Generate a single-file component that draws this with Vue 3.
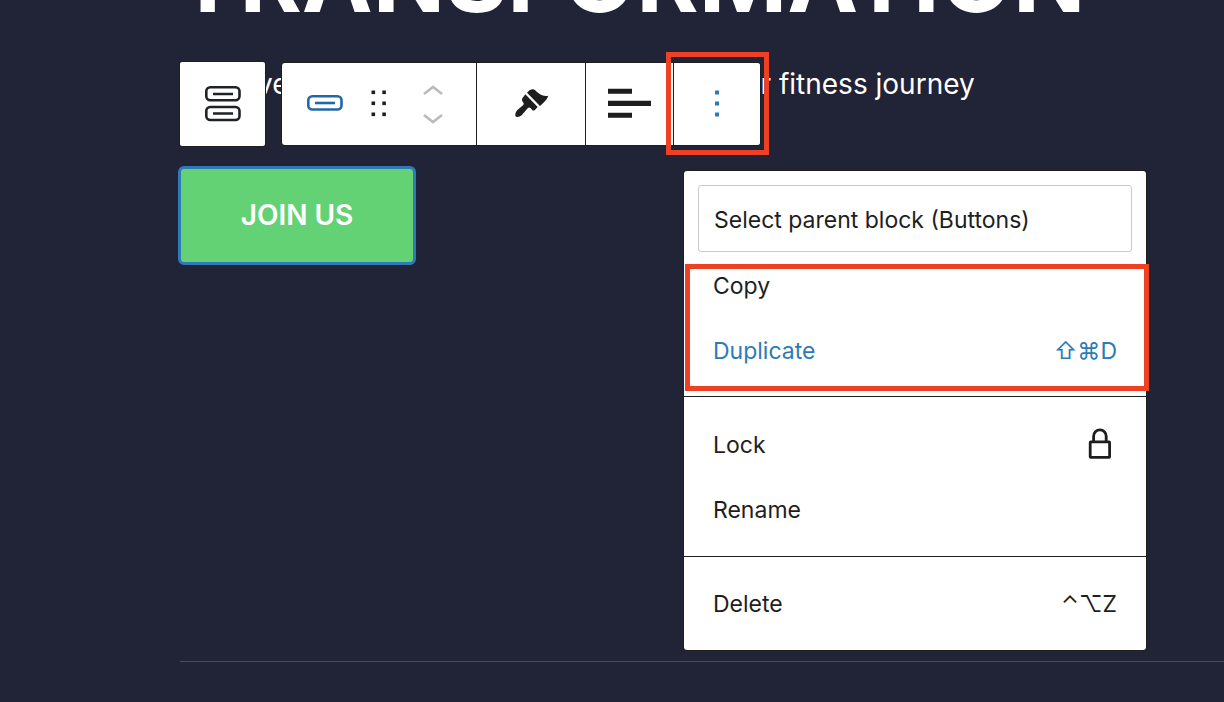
<script setup>
const groups = [
  {
    id: 'edit',
    parent: 'Select parent block (Buttons)',
    marked: true,
    items: [
      { label: 'Copy' },
      { label: 'Duplicate', keys: '⇧⌘D', active: true },
    ],
  },
  {
    id: 'manage',
    items: [{ label: 'Lock', lock: true }, { label: 'Rename' }],
  },
  {
    id: 'remove',
    items: [{ label: 'Delete', keys: '⌃⌥Z' }],
  },
]
const dotRows = [2, 13, 24]
</script>

<template>
  <main class="page">
    <section class="hero">
      <h1 class="title">TRANSFORMATION</h1>
      <p class="tagline"><span>ve</span><span class="tagline-end">r fitness journey</span></p>
      <a class="join" href="#">JOIN US</a>
    </section>
    <hr class="rule" />

    <div class="toolbar" role="toolbar" aria-label="Block tools">
      <button class="tool parent" type="button" aria-label="Select parent block">
        <svg width="36" height="36" viewBox="0 0 36 36" class="line dark">
          <rect x="1.3" y="1.3" width="33.2" height="13" rx="4" />
          <path d="M8 8h20M8 27.500h20" />
          <rect x="1.3" y="21" width="33.2" height="13" rx="4" />
        </svg>
      </button>
      <div class="bar">
        <div class="segment block">
          <button class="tool type" type="button" aria-label="Button">
            <svg width="36" height="16" viewBox="0 0 36 16" class="line blue">
              <rect x="1.3" y="1.3" width="33.2" height="13.2" rx="4" />
              <path d="M8 8h20" />
            </svg>
          </button>
          <button class="tool drag" type="button" aria-label="Drag">
            <svg width="16" height="28" viewBox="0 0 16 28">
              <template v-for="y in dotRows" :key="y">
                <rect x="0.5" :y="y - 0.5" width="3.6" height="3.6" fill="#1e1e1e" />
                <rect x="11.3" :y="y - 0.5" width="3.6" height="3.6" fill="#1e1e1e" />
              </template>
            </svg>
          </button>
          <div class="movers">
            <button class="tool mover" type="button" aria-label="Move up" disabled>
              <svg width="20" height="12" viewBox="0 0 20 12"><path d="M1 10l9-7L19 10" /></svg>
            </button>
            <button class="tool mover" type="button" aria-label="Move down" disabled>
              <svg width="20" height="12" viewBox="0 0 20 12"><path d="M1 2l9 7L19 2" /></svg>
            </button>
          </div>
        </div>
        <button class="tool segment brush" type="button" aria-label="Paste styles">
          <svg width="38" height="32" viewBox="99 112 114 96" fill="#1e1e1e">
            <path d="M141 129Q150 116 160 119Q166 121 171 127L180 134Q192 141 205 138Q201 150 192 158L180 169Z" />
            <path d="M136 134L173 172L164 182Q160 184 156 180Q149 170 143 176L125 197Q118 203 110 202Q104 200 106 193Q107 187 112 181L129 167Q134 162 128 156Q124 151 127 146Z" />
          </svg>
        </button>
        <button class="tool segment align" type="button" aria-label="Align text">
          <svg width="44" height="30" viewBox="0 0 44 30" fill="#1e1e1e">
            <path d="M0 0.800h24v5H0zM0 12.800h43v5.200H0zM0 24.800h24v5H0z" />
          </svg>
        </button>
        <button class="tool segment more" type="button" aria-label="Options">
          <svg width="6" height="28" viewBox="0 0 6 28" fill="#2b7bb9">
            <rect v-for="y in dotRows" :key="y" x="1" :y="y - 0.5" width="4" height="4" />
          </svg>
          <span class="mark mark-more"></span>
        </button>
      </div>
    </div>

    <div class="menu" role="menu" aria-label="Options">
      <div v-for="group in groups" :key="group.id" class="group">
        <button v-if="group.parent" class="select-parent" type="button" role="menuitem">{{ group.parent }}</button>
        <button
          v-for="item in group.items"
          :key="item.label"
          class="item"
          :class="{ active: item.active }"
          type="button"
          role="menuitem"
        >
          <span>{{ item.label }}</span>
          <span v-if="item.keys" class="keys">{{ item.keys }}</span>
          <svg v-if="item.lock" class="lock" width="24" height="34" viewBox="0 0 24 34">
            <rect x="2.2" y="13.9" width="19.4" height="15.4" rx="0.5" />
            <path d="M5.600 13.900V8.200a6.300 6.300 0 0 1 12.600 0v5.700" />
          </svg>
        </button>
        <span v-if="group.marked" class="mark mark-group"></span>
      </div>
    </div>
  </main>
</template>

<style>
body {
  background: #212336;
}
</style>

<style scoped>
.page {
  position: relative;
  box-sizing: border-box;
  min-height: 100vh;
  padding-left: 180px;
  overflow: hidden;
  background: #212336;
  color: #fff;
  font-family: Inter, "Liberation Sans", sans-serif;
}
.hero {
  display: flow-root;
  min-height: 661px;
}
.title {
  margin: -69px 0 0 -4px;
  font-size: 95px;
  line-height: 94px;
  font-weight: 700;
  white-space: nowrap;
}
.tagline {
  display: flex;
  gap: 472px;
  margin: 39px 0 0 77px;
  font-size: 28px;
  line-height: 40px;
  white-space: nowrap;
}
.join {
  display: flex;
  align-items: center;
  justify-content: center;
  box-sizing: border-box;
  width: 238px;
  height: 99px;
  margin: 62px 0 0 -2px;
  padding-bottom: 2px;
  border: 3px solid #2f79b6;
  border-radius: 6px;
  background: #63d274;
  color: #fff;
  font-size: 28px;
  font-weight: 600;
  text-decoration: none;
}
.rule {
  margin: 0;
  border: 0;
  border-top: 1px solid #4a4d60;
}
.tool {
  display: flex;
  align-items: center;
  justify-content: center;
  padding: 0;
  border: 0;
  background: #fff;
}
.tool svg,
.lock {
  display: block;
  flex: none;
}
.line {
  fill: none;
  stroke-width: 2.6;
}
.dark {
  stroke: #1e2327;
}
.blue {
  stroke: #2268a8;
}
.toolbar {
  position: absolute;
  top: 62px;
  left: 180px;
  display: flex;
  align-items: center;
  gap: 17px;
}
.parent {
  width: 85px;
  height: 84px;
  border-radius: 2px;
  box-shadow: 0 0 0 1px #1e1e1e;
}
.bar {
  display: flex;
  height: 82px;
  border-radius: 3px;
  background: #fff;
  box-shadow: 0 0 0 1px #1e1e1e;
}
.segment {
  box-sizing: border-box;
  padding-bottom: 2px;
}
.segment + .segment {
  border-left: 1px solid #1e1e1e;
}
.block {
  display: flex;
  align-items: center;
  width: 194px;
}
.type {
  margin-left: 25px;
}
.drag {
  margin-left: 28px;
}
.movers {
  display: grid;
  gap: 17px;
  margin: 2px 0 0 36px;
}
.mover path {
  fill: none;
  stroke: #bbb;
  stroke-width: 2.6;
}
.brush {
  width: 109px;
  padding-left: 2px;
}
.align {
  width: 88px;
  padding-left: 1px;
}
.more {
  position: relative;
  width: 87px;
  border-radius: 0 3px 3px 0;
}
.mark {
  position: absolute;
  border: 5px solid #ee4023;
  pointer-events: none;
}
.mark-more {
  inset: -11px -9px -10px -8px;
}
.menu {
  position: absolute;
  top: 171px;
  left: 684px;
  width: 462px;
  border-radius: 3px;
  background: #fff;
  box-shadow: 0 0 0 1px #1e1e1e;
  color: #1e1e1e;
}
.group {
  position: relative;
  padding: 15px 14px 14px;
}
.group:first-child {
  padding: 14px 14px 13px;
}
.group:last-child {
  padding: 14px;
}
.group + .group {
  border-top: 1px solid #1e1e1e;
}
.select-parent,
.item {
  display: flex;
  align-items: center;
  box-sizing: border-box;
  width: 100%;
  border: 0;
  background: none;
  color: inherit;
  font: inherit;
  font-size: 23px;
  line-height: 32px;
  text-align: left;
}
.select-parent {
  height: 67px;
  margin-bottom: 1px;
  padding: 2px 15px 0;
  border: 1px solid #ccc;
  border-radius: 3px;
}
.item {
  justify-content: space-between;
  height: 65px;
  padding: 0 15px;
}
.active {
  color: #2b7bb9;
}
.lock {
  margin-right: 5px;
  fill: none;
  stroke: #1e1e1e;
  stroke-width: 2.8;
}
.mark-group {
  inset: 93px -3px 5px 1px;
}
</style>
